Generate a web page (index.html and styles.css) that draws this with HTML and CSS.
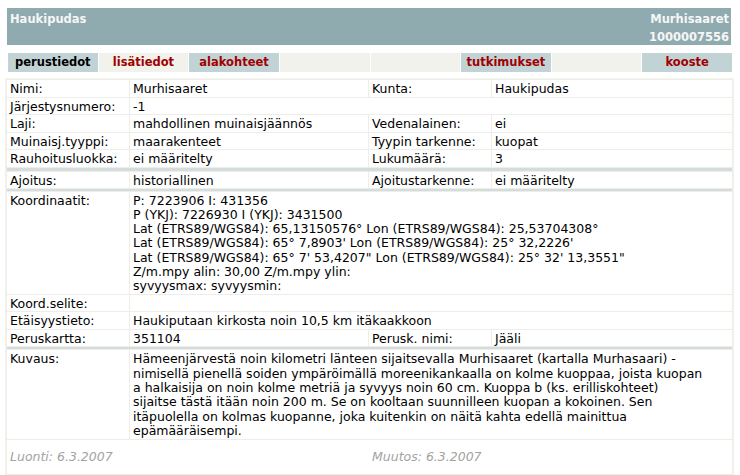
FILE: index.html
```html
<!DOCTYPE html>
<html lang="fi">
<head>
<meta charset="utf-8">
<title>Murhisaaret – perustiedot</title>
<link rel="stylesheet" href="styles.css">
</head>
<body>
<div class="header">
  <div class="header-left">Haukipudas</div>
  <div class="header-right">
    <div>Murhisaaret</div>
    <div>1000007556</div>
  </div>
</div>

<table class="tabs">
  <tr>
    <td class="tab has active">perustiedot</td>
    <td class="tab">lisätiedot</td>
    <td class="tab has">alakohteet</td>
    <td class="tab"></td>
    <td class="tab"></td>
    <td class="tab has">tutkimukset</td>
    <td class="tab"></td>
    <td class="tab has">kooste</td>
  </tr>
</table>

<table class="info">
  <colgroup>
    <col class="c-label">
    <col class="c-value">
    <col class="c-label">
    <col class="c-value2">
  </colgroup>
  <tr><td>Nimi:</td><td>Murhisaaret</td><td>Kunta:</td><td>Haukipudas</td></tr>
  <tr><td>Järjestysnumero:</td><td colspan="3">-1</td></tr>
  <tr><td>Laji:</td><td>mahdollinen muinaisjäännös</td><td>Vedenalainen:</td><td>ei</td></tr>
  <tr><td>Muinaisj.tyyppi:</td><td>maarakenteet</td><td>Tyypin tarkenne:</td><td>kuopat</td></tr>
  <tr><td>Rauhoitusluokka:</td><td>ei määritelty</td><td>Lukumäärä:</td><td>3</td></tr>
  <tr class="band band-wide"><td colspan="4"></td></tr>
  <tr><td>Ajoitus:</td><td>historiallinen</td><td>Ajoitustarkenne:</td><td>ei määritelty</td></tr>
  <tr class="band"><td colspan="4"></td></tr>
  <tr class="multi">
    <td>Koordinaatit:</td>
    <td colspan="3">P: 7223906 I: 431356<br>P (YKJ): 7226930 I (YKJ): 3431500<br>Lat (ETRS89/WGS84): 65,13150576° Lon (ETRS89/WGS84): 25,53704308°<br>Lat (ETRS89/WGS84): 65° 7,8903' Lon (ETRS89/WGS84): 25° 32,2226'<br>Lat (ETRS89/WGS84): 65° 7' 53,4207" Lon (ETRS89/WGS84): 25° 32' 13,3551"<br>Z/m.mpy alin: 30,00 Z/m.mpy ylin:<br>syvyysmax: syvyysmin:</td>
  </tr>
  <tr><td>Koord.selite:</td><td colspan="3"></td></tr>
  <tr><td>Etäisyystieto:</td><td colspan="3">Haukiputaan kirkosta noin 10,5 km itäkaakkoon</td></tr>
  <tr><td>Peruskartta:</td><td>351104</td><td>Perusk. nimi:</td><td>Jääli</td></tr>
  <tr class="band"><td colspan="4"></td></tr>
  <tr class="multi desc-row">
    <td>Kuvaus:</td>
    <td colspan="3" class="desc">Hämeenjärvestä noin kilometri länteen sijaitsevalla Murhisaaret (kartalla Murhasaari) -<br>nimisellä pienellä soiden ympäröimällä moreenikankaalla on kolme kuoppaa, joista kuopan<br>a halkaisija on noin kolme metriä ja syvyys noin 60 cm. Kuoppa b (ks. erilliskohteet)<br>sijaitse tästä itään noin 200 m. Se on kooltaan suunnilleen kuopan a kokoinen. Sen<br>itäpuolella on kolmas kuopanne, joka kuitenkin on näitä kahta edellä mainittua<br>epämääräisempi.</td>
  </tr>
  <tr class="meta">
    <td colspan="4">
      <div class="meta-row"><span class="meta-left">Luonti: 6.3.2007</span><span>Muutos: 6.3.2007</span></div>
    </td>
  </tr>
  <tr class="tail"><td colspan="4"></td></tr>
</table>
</body>
</html>
```

FILE: styles.css
```css
html, body {
  margin: 0;
  padding: 0;
  background: #ffffff;
}

body {
  font-family: "DejaVu Sans", Verdana, sans-serif;
  font-size: 12.5px;
  color: #000000;
  padding-top: 8px;
}

.header {
  display: flex;
  justify-content: space-between;
  margin: 0 9px 0 7px;
  height: 37px;
  box-sizing: border-box;
  padding: 2px 2px 0 3px;
  background: #8fabb0;
  color: #f6f6f6;
  font-size: 11.5px;
  font-weight: bold;
  line-height: 18px;
  overflow: hidden;
}

.header-right {
  text-align: right;
}

.tabs {
  margin: 8px 0 0 7px;
  width: 726px;
  table-layout: fixed;
  border-collapse: separate;
  border-spacing: 1px 0;
  background: #ffffff;
}

.tab {
  height: 19px;
  padding: 0;
  text-align: center;
  font-size: 11.5px;
  font-weight: bold;
  color: #a00000;
  background: #f2f2ec;
  line-height: 19px;
}

.tab.has {
  background: #c2d3d6;
}

.tab.active {
  color: #000000;
}

.info {
  margin: 6px 0 0 5px;
  width: 729px;
  box-sizing: border-box;
  table-layout: fixed;
  border-collapse: separate;
  border-spacing: 1px;
  border: 1px solid #f3f3ee;
  background: #eeeee9;
}

.c-label { width: 122px; }
.c-value { width: 238px; }
.c-value2 { width: 240px; }

.info td {
  background: #ffffff;
  padding: 2px 3px 0.5px 3px;
  line-height: 14px;
  vertical-align: top;
}

.info tr.multi td {
  line-height: 14.15px;
}

.info tr.desc-row td {
  line-height: 14.4px;
}

.info td.desc {
  padding-right: 10px;
}

.info tr.band td {
  height: 2px;
  padding: 0;
  background: #d4dcde;
}

.info tr.band-wide td {
  height: 3px;
}

.info tr.meta td {
  height: 34px;
  padding: 0 3px;
  vertical-align: middle;
  color: #a3a3a3;
  font-style: italic;
}

.meta-row {
  display: flex;
}

.meta-left {
  width: 362px;
}

.info tr.tail td {
  height: 6px;
  padding: 0;
}
```
